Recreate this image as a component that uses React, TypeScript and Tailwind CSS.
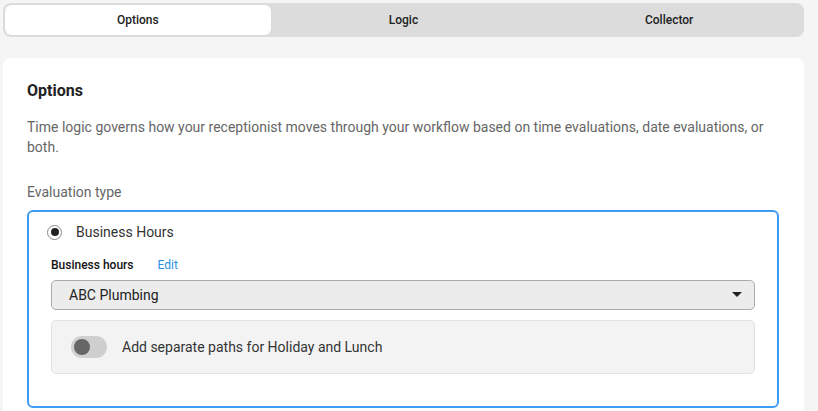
import { useState } from "react";

const tabs = ["Options", "Logic", "Collector"];

export default function App() {
  const [tab, setTab] = useState("Options");
  const [split, setSplit] = useState(false);

  return (
    <div className="min-h-screen bg-[#f5f5f5] px-[3px] pt-[3px] font-['Roboto',sans-serif] text-[#333]">
      <div className="w-[801px] grid grid-cols-3 rounded-lg bg-[#dcdcdc] p-[2px]">
        {tabs.map((t) => (
          <button
            key={t}
            onClick={() => setTab(t)}
            className={`h-[30px] rounded-md text-[12px] font-medium text-[#222] ${tab === t ? "bg-white shadow-[0_0_1px_rgba(0,0,0,0.1)]" : ""}`}
          >
            {t}
          </button>
        ))}
      </div>

      <div className="mt-[21px] w-[801px] rounded-t-lg bg-white px-6 pt-[23px] pb-[3px]">
        <h2 className="text-[16px] font-bold leading-5 text-[#222]">Options</h2>
        <p className="mt-[16px] text-[14px] leading-5 text-[#666] pr-4">
          Time logic governs how your receptionist moves through your workflow based on time evaluations, date evaluations, or both.
        </p>
        <div className="mt-[25px] text-[14px] leading-5 text-[#666]">Evaluation type</div>

        <div className="mt-[8px] w-[752px] rounded-md border-2 border-[#3d9df3] px-[22px] pt-[10px] pb-[32px]">
          <label className="flex items-center h-5">
            <span className="-ml-[4px] flex h-[15px] w-[15px] items-center justify-center rounded-full border border-[#888] bg-white">
              <span className="h-[8px] w-[8px] rounded-full bg-[#222]" />
            </span>
            <span className="ml-[14px] text-[14px] text-[#333]">Business Hours</span>
          </label>

          <div className="mt-[15px] flex items-center h-4 text-[12px]">
            <span className="font-medium text-[#111]">Business hours</span>
            <a className="ml-[24px] text-[#2b8fe0]">Edit</a>
          </div>

          <div className="mt-[7px] flex h-[30px] items-center justify-between rounded-[5px] border border-[#aaa] bg-[#ececec] pl-[17px] pr-[12px]">
            <span className="text-[14px] text-[#222]">ABC Plumbing</span>
            <svg width="10" height="6" viewBox="0 0 10 6">
              <path d="M0 0h10L5 5z" fill="#222" />
            </svg>
          </div>

          <div className="mt-[10px] flex h-[54px] items-center rounded-[5px] border border-[#e2e2e2] bg-[#f3f3f3] pl-[19px]">
            <button
              onClick={() => setSplit(!split)}
              className={`flex h-[22px] w-[36px] items-center rounded-full bg-[#cfcfcf] px-[3px] ${split ? "justify-end" : "justify-start"}`}
            >
              <span className="h-4 w-4 rounded-full bg-[#666]" />
            </button>
            <span className="ml-[15px] text-[14px] text-[#333]">Add separate paths for Holiday and Lunch</span>
          </div>
        </div>
      </div>
    </div>
  );
}
